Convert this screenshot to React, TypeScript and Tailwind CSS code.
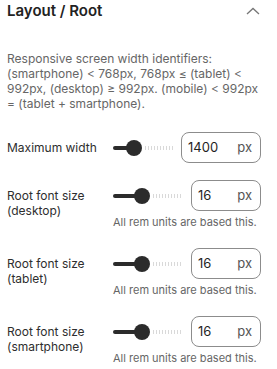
import React from "react";

interface RowProps {
  label: string[];
  value: string;
  filled: number;
  inputWidth: string;
  hint?: boolean;
}

function Slider({ filled }: { filled: number }) {
  return (
    <div className="flex flex-1 items-center h-4">
      <div className="h-1 rounded-l-full bg-[#2b2b2b]" style={{ width: filled }} />
      <div className="w-4 h-4 -ml-px rounded-full bg-[#2b2b2b] shrink-0" />
      <div className="ml-[3px] h-1 flex-1 bg-[repeating-linear-gradient(90deg,#d9d9d9_0_1px,transparent_1px_3px)]" />
    </div>
  );
}

function Row({ label, value, filled, inputWidth, hint }: RowProps) {
  return (
    <div className="flex items-start">
      <div className="w-[106px] shrink-0 pt-[8px] text-[12px] leading-[15px] text-[#2e2e2e]">
        {label.map((l) => (
          <div key={l}>{l}</div>
        ))}
      </div>
      <div className="flex flex-1 flex-col pr-[9px]">
        <div className="flex items-center gap-2 h-[31px]">
          <Slider filled={filled} />
          <div
            className={`flex items-center justify-between h-full rounded-lg border border-[#8c8c8c] pl-[6px] pr-[8px] text-[13px] ${inputWidth}`}
          >
            <span className="text-[#1f1f1f]">{value}</span>
            <span className="text-[#555]">px</span>
          </div>
        </div>
        {hint && (
          <div className="mt-1 text-[11px] leading-[14px] text-[#666] whitespace-nowrap">
            All rem units are based this.
          </div>
        )}
      </div>
    </div>
  );
}

export default function App() {
  return (
    <div className="w-[277px] h-[369px] bg-white font-['Inter',sans-serif] px-[7px] overflow-hidden">
      <div className="flex items-center justify-between h-[22px]">
        <h2 className="text-[15px] font-semibold text-[#222]">Layout / Root</h2>
        <svg width="14" height="8" viewBox="0 0 14 8" className="mr-[10px] mt-[-1px]">
          <polyline points="1,7 7,1.5 13,7" fill="none" stroke="#777" strokeWidth="1.3" />
        </svg>
      </div>
      <p className="mt-[29px] pr-[6px] text-[12px] leading-[15px] text-[#666]">
        Responsive screen width identifiers: (smartphone) &lt; 768px, 768px ≤ (tablet) &lt; 992px,
        (desktop) ≥ 992px. (mobile) &lt; 992px = (tablet + smartphone).
      </p>
      <div className="mt-[21px] flex flex-col">
        <Row label={["Maximum width"]} value="1400" filled={14} inputWidth="w-[80px]" />
        <div className="h-[17px]" />
        <Row label={["Root font size", "(desktop)"]} value="16" filled={22} inputWidth="w-[70px]" hint />
        <div className="h-[19px]" />
        <Row label={["Root font size", "(tablet)"]} value="16" filled={22} inputWidth="w-[70px]" hint />
        <div className="h-[19px]" />
        <Row label={["Root font size", "(smartphone)"]} value="16" filled={22} inputWidth="w-[70px]" hint />
      </div>
    </div>
  );
}
